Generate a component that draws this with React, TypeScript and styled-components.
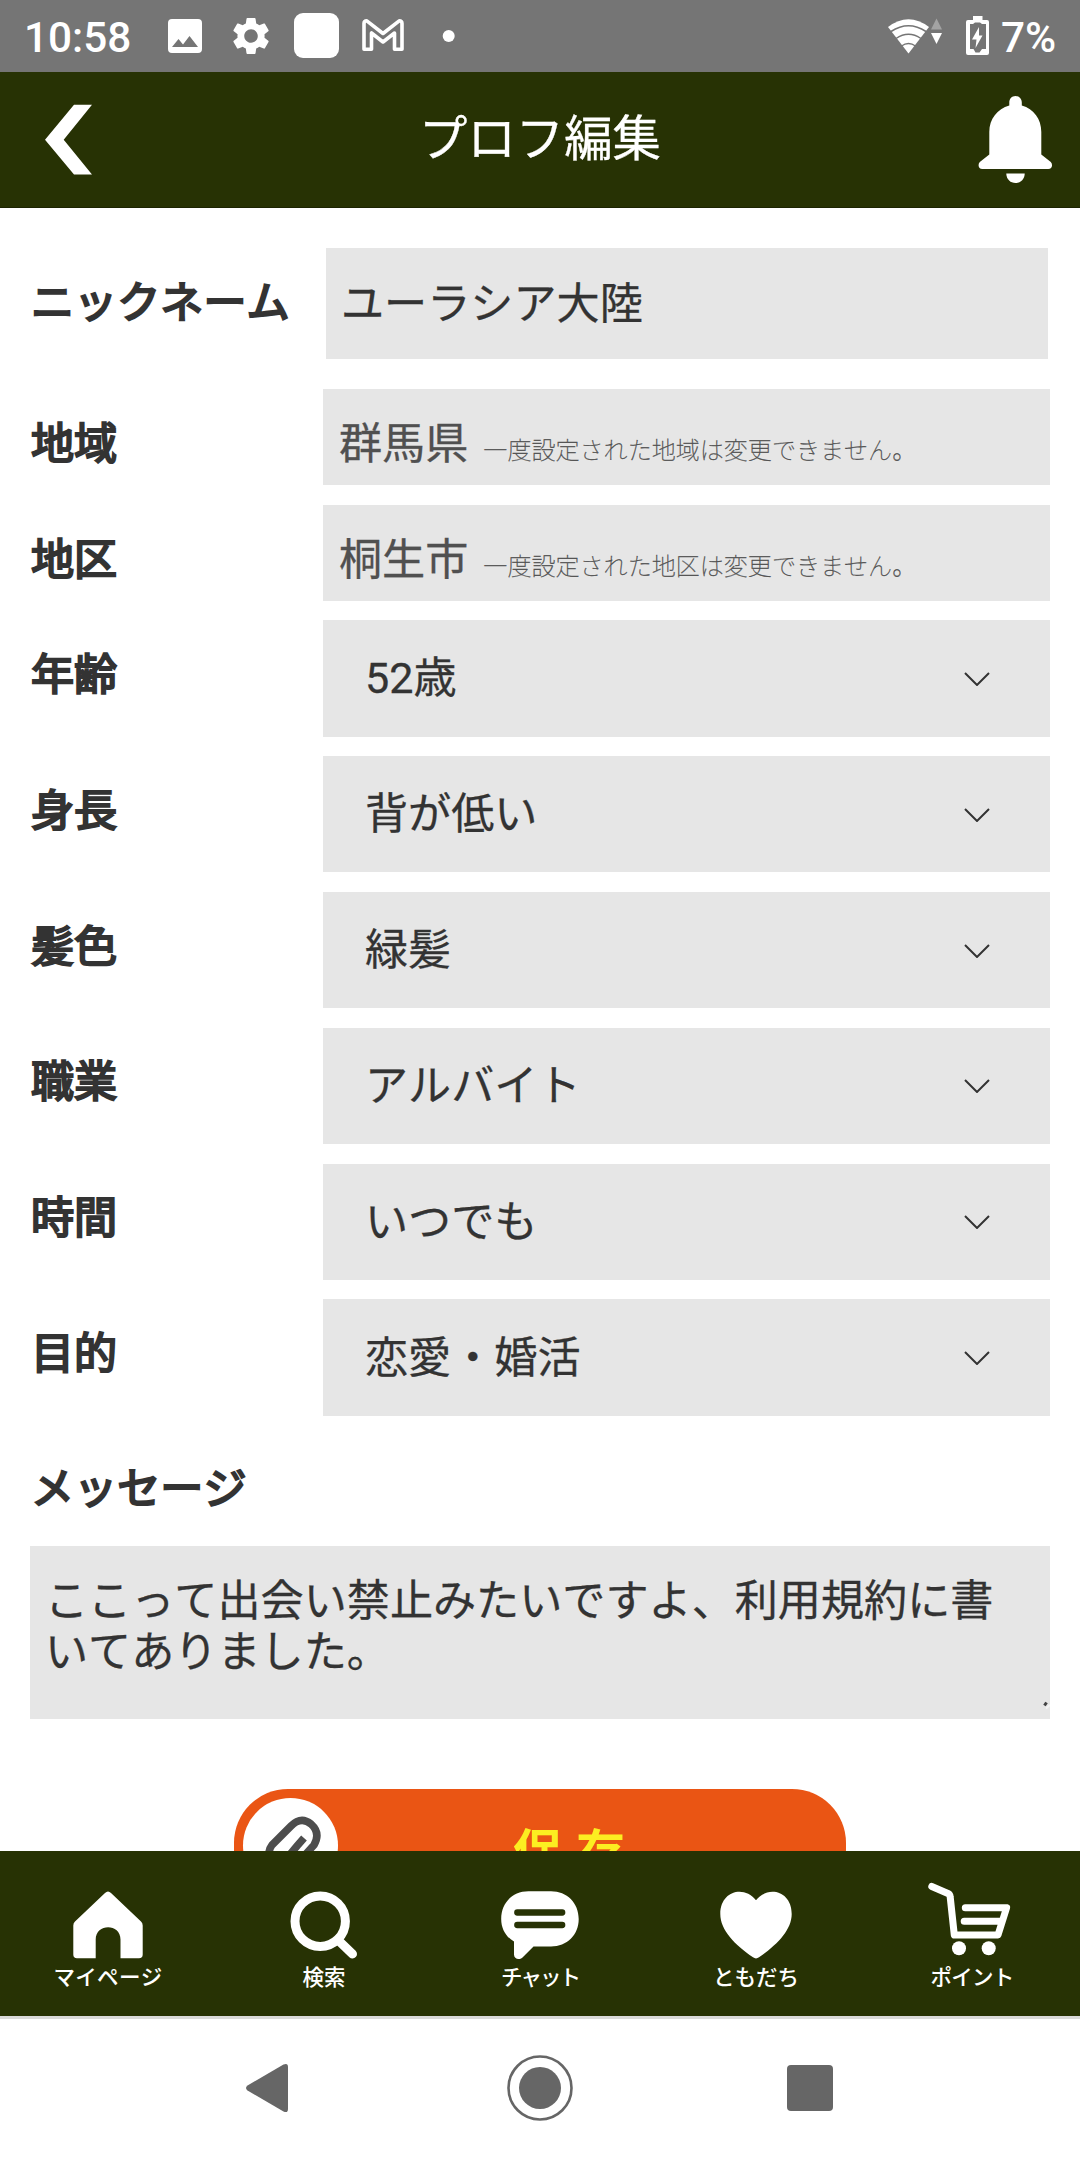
import React from "react";
import styled, { createGlobalStyle } from "styled-components";

const GlobalStyle = createGlobalStyle`
  *, *::before, *::after { box-sizing: border-box; }
  body { margin: 0; background: #fff; }
  svg { display: block; flex: none; }
`;

const Screen = styled.div`
  width: 1080px;
  height: 2160px;
  display: flex;
  flex-direction: column;
  overflow: hidden;
  background: #fff;
  color: #333;
  font-family: Roboto, "Noto Sans CJK JP", sans-serif;
  font-size: 43.12px;
  font-kerning: none;
`;

const StatusBar = styled.div`
  flex: none;
  height: 72px;
  padding: 0 24px 0 24px;
  display: flex;
  align-items: center;
  background: #757575;
  color: #fff;
`;

const StatusText = styled.span<{ $width: number }>`
  width: ${(p) => p.$width}px;
  padding-top: 3px;
  font-size: 42.3px;
  font-weight: 500;
  line-height: 50px;
  white-space: nowrap;
`;

const Spacer = styled.div`
  flex: 1;
`;

const Header = styled.header`
  flex: none;
  height: 136px;
  padding: 0 25px 0 42px;
  display: grid;
  grid-template-columns: 80px 1fr 80px;
  align-items: center;
  background: #273204;
  border-bottom: 1px solid #1c2402;
  color: #fff;
`;

const Title = styled.h1`
  margin: 0;
  padding: 0 17px 0 0;
  font-size: 48.4px;
  font-weight: 400;
  line-height: 60px;
  text-align: center;
  -webkit-text-stroke: 0.3px #fff;
`;

const IconButton = styled.button<{ $end?: boolean }>`
  display: flex;
  justify-content: ${(p) => (p.$end ? "flex-end" : "flex-start")};
  padding: 0;
  border: 0;
  background: none;
`;

const Form = styled.main`
  flex: 1;
  min-height: 0;
  overflow: hidden;
  padding: 40px 30px 0;
  display: flex;
  flex-direction: column;
`;

const Row = styled.div<{ $height: number; $gap: number; $inset?: boolean }>`
  flex: none;
  height: ${(p) => p.$height}px;
  margin-bottom: ${(p) => p.$gap}px;
  display: grid;
  grid-template-columns: ${(p) => (p.$inset ? "296px 722px" : "293px 727px")};
`;

const Label = styled.label<{ $shift?: number }>`
  display: flex;
  align-items: center;
  padding-left: 1px;
  padding-top: ${(p) => Math.max(p.$shift ?? 0, 0)}px;
  padding-bottom: ${(p) => Math.max(-(p.$shift ?? 0), 0)}px;
  line-height: 51px;
  white-space: nowrap;
  -webkit-text-stroke: 2.2px #333;
`;

const Field = styled.div`
  display: flex;
  align-items: center;
  padding: 1px 0 0 15px;
  background: #e6e6e6;
  line-height: 51px;
  -webkit-text-stroke: 0.3px #333;
`;

const LockedField = styled.div`
  display: flex;
  align-items: baseline;
  gap: 15px;
  padding: 30px 0 0 16px;
  background: #e6e6e6;
  color: #505050;
  line-height: 51px;
  white-space: nowrap;
  -webkit-text-stroke: 0.3px #505050;
`;

const Note = styled.small`
  font-size: 24.05px;
  font-weight: 100;
  line-height: 30px;
`;

const Select = styled.div`
  display: flex;
  align-items: center;
  justify-content: space-between;
  padding: 1px 60px 0 42px;
  background: #e6e6e6;
  line-height: 51px;
  -webkit-text-stroke: 0.3px #333;
`;

const MessageLabel = styled(Label)`
  flex: none;
  height: 110.6px;
  padding-top: 0;
  padding-bottom: 2px;
`;

const Message = styled.div`
  flex: none;
  position: relative;
  height: 173px;
  padding: 30px 30px 0 15px;
  background: #e6e6e6;
  line-height: 51px;
  -webkit-text-stroke: 0.3px #333;
`;

const ResizeGrip = styled.svg`
  position: absolute;
  right: 0;
  bottom: 9px;
`;

const SaveButton = styled.button`
  flex: none;
  align-self: center;
  width: 612px;
  height: 114px;
  margin-top: 70px;
  padding: 0 64px 0 9px;
  display: flex;
  align-items: center;
  border: 0;
  border-radius: 54px;
  background: #ea5514;
  color: #fcee21;
  font-family: inherit;
`;

const SaveIcon = styled.span`
  flex: none;
  width: 95px;
  height: 95px;
  border-radius: 50%;
  background: #fff;
`;

const SaveText = styled.span`
  flex: 1;
  padding: 17px 0 0 32px;
  font-size: 49px;
  font-weight: 700;
  line-height: 60px;
  letter-spacing: 14px;
`;

const TabBar = styled.nav`
  flex: none;
  height: 168px;
  padding-top: 29px;
  display: grid;
  grid-template-columns: repeat(5, 1fr);
  background: #273204;
  border-bottom: 3px solid #dadada;
  color: #fff;
`;

const Tab = styled.a`
  display: flex;
  flex-direction: column;
  align-items: center;
`;

const TabLabel = styled.span<{ $tracking: number }>`
  font-size: 21.5px;
  font-weight: 500;
  line-height: 36px;
  letter-spacing: ${(p) => p.$tracking}px;
  white-space: nowrap;
`;

const SystemNav = styled.div`
  flex: none;
  height: 141px;
  padding: 0 135px 3px;
  display: grid;
  grid-template-columns: repeat(3, 1fr);
  place-items: center;
  color: #666;
`;

const Chevron = () => (
  <svg width="26" height="14" viewBox="0 0 26 14" fill="none" stroke="#333" strokeWidth="2">
    <path d="M1 1 L13 13 L25 1" />
  </svg>
);

const StatusIcons = () => (
  <svg width="310" height="72" viewBox="150 0 310 72" fill="#fff">
    <path
      fillRule="evenodd"
      d="M172 19h26a4 4 0 0 1 4 4v26a4 4 0 0 1-4 4h-26a4 4 0 0 1-4-4v-26a4 4 0 0 1 4-4zM172 47h26l-8.500-11-6.500 8.500-4.500-5.500z"
    />
    <g transform="translate(228.400 13.400) scale(1.885)">
      <path d="M19.140 12.940c.04-.3.060-.61.060-.94 0-.32-.02-.64-.07-.94l2.030-1.580c.18-.14.230-.41.120-.61l-1.920-3.320c-.12-.22-.37-.29-.59-.22l-2.390.96c-.5-.38-1.030-.7-1.620-.94l-.36-2.540c-.04-.24-.24-.41-.48-.41h-3.840c-.24 0-.43.170-.47.410l-.36 2.540c-.59.240-1.130.570-1.620.940l-2.390-.96c-.22-.08-.47 0-.59.220L2.740 8.870c-.12.210-.08.470.120.610l2.030 1.580c-.05.300-.09.630-.09.940s.02.640.070.940l-2.030 1.580c-.18.140-.23.410-.12.610l1.920 3.320c.12.220.37.290.59.220l2.390-.96c.5.380 1.030.7 1.620.940l.36 2.540c.05.240.24.410.48.410h3.840c.24 0 .44-.17.470-.41l.36-2.540c.59-.24 1.130-.56 1.620-.94l2.390.96c.22.080.47 0 .59-.22l1.920-3.320c.12-.22.070-.47-.12-.61l-2.010-1.580zM12 15.600c-1.980 0-3.600-1.620-3.600-3.600s1.620-3.600 3.600-3.600 3.600 1.620 3.600 3.600-1.620 3.600-3.600 3.600z" />
    </g>
    <rect x="294" y="13" width="45" height="45" rx="9" />
    <path
      d="M364 49.200V23.500Q364 20.800 366.800 20.800L383 33.500 399.200 20.800Q402 20.800 402 23.500V49.200H394.500V33L383 42 371.500 33V49.200Z"
      fill="none"
      stroke="#fff"
      strokeWidth="3.600"
      strokeLinejoin="round"
    />
    <circle cx="448.700" cy="36" r="6" />
  </svg>
);

const SignalIcons = () => (
  <svg width="116" height="72" viewBox="885 0 116 72" fill="#fff">
    <path d="M908.500 53.500L888 27Q908.500 11.500 929 27Z" />
    <g fill="none" stroke="#757575" strokeWidth="1.500">
      <path d="M891 31.500Q908.500 20 926 31.500" />
      <path d="M896 38.500Q908.500 30 921 38.500" />
      <path d="M901.500 46Q908.500 41 915.500 46" />
    </g>
    <path d="M931 29.500h11l-5.500-11z" fill="#a3a3a3" />
    <path d="M931 33h11l-5.500 11z" />
    <path
      fillRule="evenodd"
      d="M973 16h9.500v4h4.500q2 0 2 2v31q0 2-2 2h-19q-2 0-2-2v-31q0-2 2-2h5zM970 24v25h3.500l2 3.500h4l2.500-3.500h4V24h-4l-2-1.500h-5l-2 1.500z"
    />
    <path d="M979 27l-7 12.500h4.500l-1 8.500 7-12.500h-3.500z" />
  </svg>
);

const BackIcon = () => (
  <svg width="50" height="72" viewBox="42 103 50 72" fill="#fff">
    <path d="M92 103.800H74L45 138.700 74 173.500H92L63.700 138.700Z" />
  </svg>
);

const BellIcon = () => (
  <svg width="78" height="90" viewBox="977 95 78 90" fill="#fff">
    <path d="M1015.500 96c3.600 0 6.300 2.800 6.300 6.500v3c12 3.500 19.500 13.500 19.500 26.500v22.500l9.500 7.500c2.500 3 1 7-2.500 7h-66c-3.500 0-5-4-2.500-7l9.500-7.500V132c0-13 8-23 20-26.500v-3c0-3.700 2.600-6.500 6.200-6.500z" />
    <path d="M1006.300 173.500h18.400c0 5.500-4 9.500-9.200 9.500s-9.200-4-9.200-9.500z" />
  </svg>
);

const ClipIcon = () => (
  <svg width="95" height="95" viewBox="243 1798 95 95" fill="none" stroke="#4d4d4d" strokeWidth="7.500">
    <path d="M304 1838L297 1846L287 1858Q281 1866 273 1860Q266 1853 272 1845L291 1826Q301 1816 311 1824Q321 1833 314 1845L296 1865" />
  </svg>
);

const HomeIcon = () => (
  <svg width="100" height="80" viewBox="0 0 100 80" fill="#fff">
    <path d="M47 13Q50 10 53 13L83 41.500Q84.700 43 84.700 45.500V74.500Q84.700 78.300 81 78.300H62.500V59.500C62.500 43 37.700 43 37.700 59.500V78.300H19Q15.300 78.300 15.300 74.500V45.500Q15.300 43 17 41.500Z" />
  </svg>
);

const SearchIcon = () => (
  <svg width="100" height="80" viewBox="0 0 100 80" fill="none" stroke="#fff" strokeWidth="9">
    <circle cx="46.200" cy="41.200" r="25.200" />
    <path d="M65 61L78.500 74" strokeLinecap="round" />
  </svg>
);

const ChatIcon = () => (
  <svg width="100" height="80" viewBox="0 0 100 80" fill="#fff">
    <path d="M38.500 11.300H61C77 11.300 88.700 23 88.700 39S77 66.500 61 66.500H43.500L32.500 77.500C29 80.500 24 79 24 74.500V61.500C16 57 11.200 49 11.200 39C11.200 23 22.500 11.300 38.500 11.300Z" />
    <path d="M27.300 32.500H72.200M27.300 45H72.200" stroke="#273204" strokeWidth="6.300" strokeLinecap="round" />
  </svg>
);

const HeartIcon = () => (
  <svg width="100" height="80" viewBox="0 0 100 80" fill="#fff">
    <path d="M50 20.300C62 5 85.700 11 85.700 34C85.700 50 71 65 53 77.300Q50 79.500 47 77.300C29 65 14.300 50 14.300 34C14.300 11 38 5 50 20.300Z" />
  </svg>
);

const CartIcon = () => (
  <svg width="100" height="80" viewBox="0 0 100 80" fill="#fff">
    <path
      d="M9.800 6.500L26 13.500Q28 14.500 28.200 17L32.300 55H76L84.600 27.700H43.300M42.200 41.300H79"
      fill="none"
      stroke="#fff"
      strokeWidth="7"
      strokeLinecap="round"
      strokeLinejoin="round"
    />
    <circle cx="37" cy="68.300" r="7" />
    <circle cx="66.700" cy="68.300" r="7" />
  </svg>
);

const selects = [
  { label: "年齢", value: "52歳" },
  { label: "身長", value: "背が低い" },
  { label: "髪色", value: "緑髪" },
  { label: "職業", value: "アルバイト" },
  { label: "時間", value: "いつでも" },
  { label: "目的", value: "恋愛・婚活" },
];

const locked = [
  { label: "地域", value: "群馬県", note: "一度設定された地域は変更できません。", gap: 20 },
  { label: "地区", value: "桐生市", note: "一度設定された地区は変更できません。", gap: 19 },
];

const tabs = [
  { label: "マイページ", Icon: HomeIcon, tracking: 0.3 },
  { label: "検索", Icon: SearchIcon, tracking: 0 },
  { label: "チャット", Icon: ChatIcon, tracking: -2 },
  { label: "ともだち", Icon: HeartIcon, tracking: 0 },
  { label: "ポイント", Icon: CartIcon, tracking: -0.8 },
];

export default function App() {
  return (
    <Screen lang="ja">
      <GlobalStyle />
      <StatusBar>
        <StatusText $width={126}>10:58</StatusText>
        <StatusIcons />
        <Spacer />
        <SignalIcons />
        <StatusText $width={55}>7%</StatusText>
      </StatusBar>
      <Header>
        <IconButton>
          <BackIcon />
        </IconButton>
        <Title>プロフ編集</Title>
        <IconButton $end>
          <BellIcon />
        </IconButton>
      </Header>
      <Form>
        <Row $height={111} $gap={30} $inset>
          <Label>ニックネーム</Label>
          <Field>ユーラシア大陸</Field>
        </Row>
        {locked.map((f) => (
          <Row key={f.label} $height={96} $gap={f.gap}>
            <Label $shift={15}>{f.label}</Label>
            <LockedField>
              {f.value}
              <Note>{f.note}</Note>
            </LockedField>
          </Row>
        ))}
        {selects.map((f) => (
          <Row key={f.label} $height={116.5} $gap={19.4}>
            <Label $shift={-6}>{f.label}</Label>
            <Select>
              {f.value}
              <Chevron />
            </Select>
          </Row>
        ))}
        <MessageLabel>メッセージ</MessageLabel>
        <Message>
          ここって出会い禁止みたいですよ、利用規約に書いてありました。
          <ResizeGrip width="8" height="10" viewBox="0 0 8 10">
            <path d="M2.500 5.500L4.500 2.500" stroke="#444" strokeWidth="3" />
            <path d="M4 8.500L8 5" stroke="#f4f4f4" strokeWidth="2" />
          </ResizeGrip>
        </Message>
        <SaveButton>
          <SaveIcon>
            <ClipIcon />
          </SaveIcon>
          <SaveText>保存</SaveText>
        </SaveButton>
      </Form>
      <TabBar>
        {tabs.map(({ label, Icon, tracking }) => (
          <Tab key={label}>
            <Icon />
            <TabLabel $tracking={tracking}>{label}</TabLabel>
          </Tab>
        ))}
      </TabBar>
      <SystemNav>
        <svg width="48" height="50" viewBox="0 0 48 50" fill="currentColor">
          <path d="M37.500 1.500Q42 -0.500 42 4V46Q42 50.500 37.500 48.500L1.500 27.500Q-1.500 25 1.500 22.500Z" />
        </svg>
        <svg width="68" height="68" viewBox="0 0 68 68" fill="currentColor">
          <circle cx="34" cy="34" r="21" />
          <circle cx="34" cy="34" r="31.500" fill="none" stroke="currentColor" strokeWidth="2.600" />
        </svg>
        <svg width="46" height="46" viewBox="0 0 46 46" fill="currentColor">
          <rect width="46" height="46" rx="4" />
        </svg>
      </SystemNav>
    </Screen>
  );
}
